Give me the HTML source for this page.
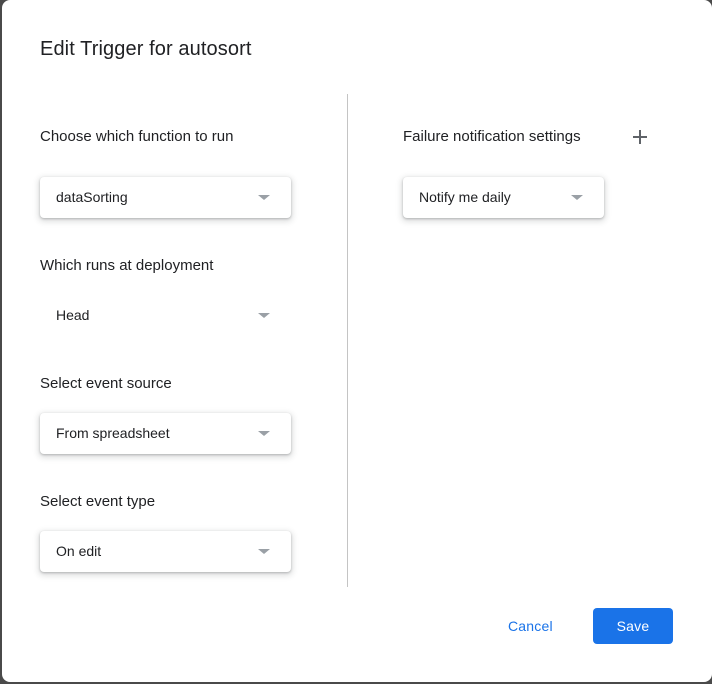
<!DOCTYPE html>
<html><head><meta charset="utf-8">
<style>
*{margin:0;padding:0;box-sizing:border-box}
html,body{width:712px;height:684px;overflow:hidden;background:#4a4a4a;font-family:"Liberation Sans",Arial,sans-serif}
#d{position:absolute;left:2px;top:0;width:710px;height:682px;background:#fff;border-radius:8px}
.t{position:absolute;left:38px;top:38px;font-size:20px;color:#202124;letter-spacing:0.1px}
.l{position:absolute;font-size:15px;color:#202124}
.s{position:absolute;width:251px;height:41px;background:#fff;border-radius:4px;box-shadow:0 1px 2px rgba(60,64,67,.3),0 2px 6px 2px rgba(60,64,67,.15);font-size:14px;color:#202124}
.s span{position:absolute;left:16px;top:12px}
.a{position:absolute;right:21px;top:18px;width:0;height:0;border-left:6px solid transparent;border-right:6px solid transparent;border-top:5px solid #9aa0a6}
.v{position:absolute;left:345px;top:94px;width:1px;height:493px;background:#c4c4c4}
.p1{position:absolute;left:631px;top:136px;width:14px;height:2px;background:#5f6368}
.p2{position:absolute;left:637px;top:130px;width:2px;height:14px;background:#5f6368}
.c{position:absolute;left:506px;top:618px;font-size:14px;color:#1a73e8;letter-spacing:.2px}
.b{position:absolute;left:591px;top:608px;width:80px;height:36px;background:#1a73e8;border-radius:4px;color:#fff;font-size:14px;text-align:center;line-height:36px;letter-spacing:.2px}
</style></head><body>
<div id="d">
<div class="t">Edit Trigger for autosort</div>
<div class="l" style="left:38px;top:128px">Choose which function to run</div>
<div class="s" style="left:38px;top:177px"><span>dataSorting</span><i class="a"></i></div>
<div class="l" style="left:38px;top:257px">Which runs at deployment</div>
<div class="s" style="left:38px;top:295px;box-shadow:none"><span>Head</span><i class="a"></i></div>
<div class="l" style="left:38px;top:375px">Select event source</div>
<div class="s" style="left:38px;top:413px"><span>From spreadsheet</span><i class="a"></i></div>
<div class="l" style="left:38px;top:493px">Select event type</div>
<div class="s" style="left:38px;top:531px"><span>On edit</span><i class="a"></i></div>
<div class="v"></div>
<div class="l" style="left:401px;top:128px">Failure notification settings</div>
<div class="p1"></div><div class="p2"></div>
<div class="s" style="left:401px;top:177px;width:201px"><span>Notify me daily</span><i class="a"></i></div>
<div class="c">Cancel</div>
<div class="b">Save</div>
</div>
</body></html>
